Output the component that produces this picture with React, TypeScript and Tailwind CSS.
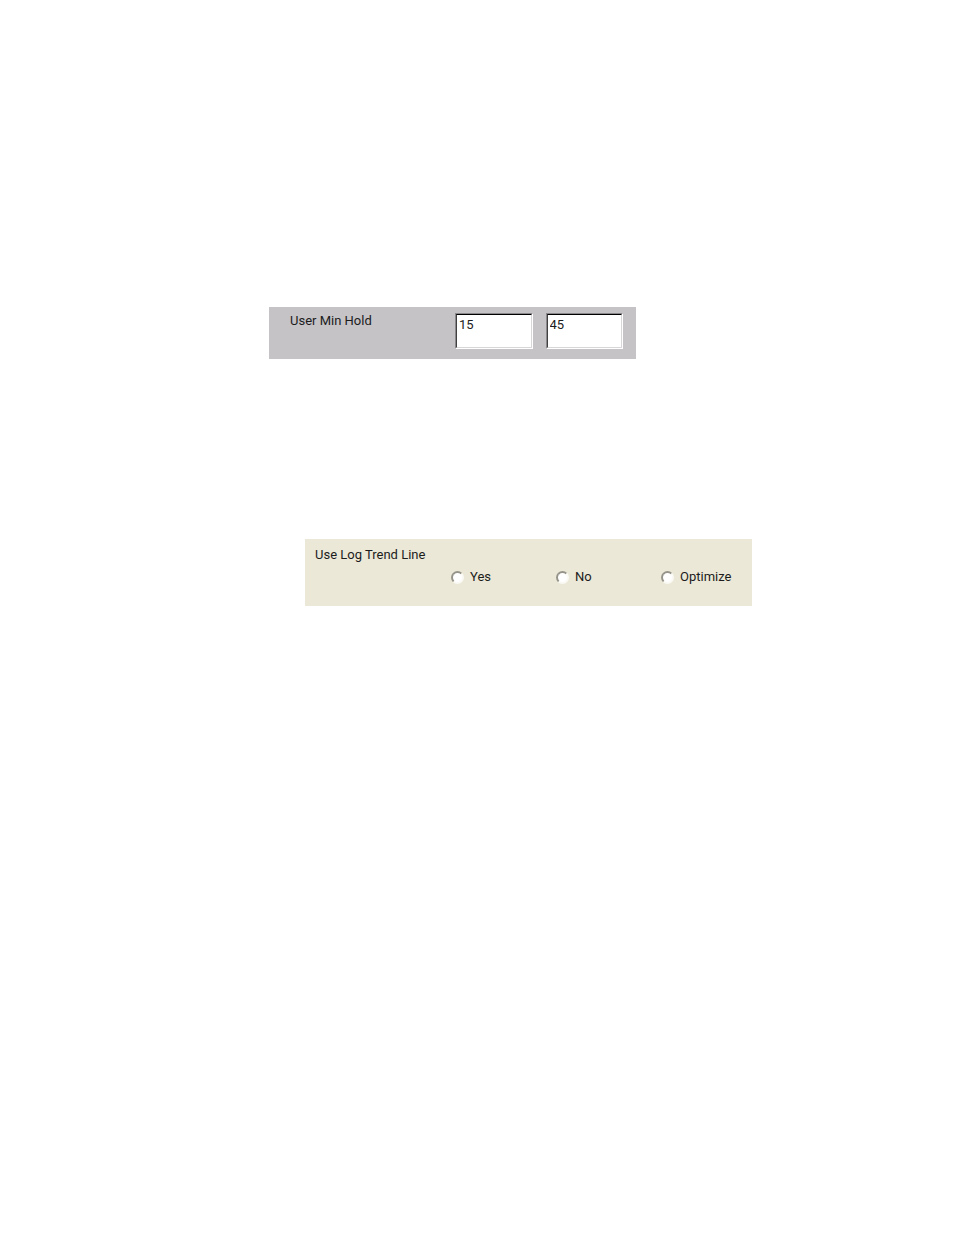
import { useState } from 'react'

const TREND_OPTIONS = ['Yes', 'No', 'Optimize']

function HoldInput({ label, value, onChange }: { label: string; value: string; onChange: (value: string) => void }) {
  return (
    <div className="min-w-0 flex-1 border border-t-[#8a888a] border-l-[#8a888a] border-r-white border-b-white">
      <input
        type="text"
        aria-label={label}
        value={value}
        onChange={e => onChange(e.target.value)}
        className="block h-[34px] w-full border border-t-black border-l-[#404040] border-r-[#d8d6d8] border-b-[#d8d6d8] bg-white px-[2px] pt-px pb-[15px] leading-4 outline-none"
      />
    </div>
  )
}

function MinHoldPanel() {
  const [low, setLow] = useState('15')
  const [high, setHigh] = useState('45')

  return (
    <section className="ml-[269px] flex h-[52px] max-w-[367px] items-start bg-[#c5c3c6] pt-[6px] pr-[13px] pl-[21px]">
      <span className="w-[165px] shrink-0">User Min Hold</span>
      <div className="flex min-w-0 flex-1 gap-[13px]">
        <HoldInput label="User Min Hold low" value={low} onChange={setLow} />
        <HoldInput label="User Min Hold high" value={high} onChange={setHigh} />
      </div>
    </section>
  )
}

function TrendLinePanel() {
  const [choice, setChoice] = useState('')

  return (
    <fieldset className="ml-[305px] h-[67px] max-w-[447px] min-w-0 bg-[#ebe8d7] pt-2 pl-[10px]">
      <legend className="float-left w-full">Use Log Trend Line</legend>
      <div className="clear-both flex pt-[6px] pl-[136px]">
        {TREND_OPTIONS.map(option => (
          <label key={option} className="flex w-[105px] shrink-0 items-center gap-[6px] last:w-auto">
            <input
              type="radio"
              name="trend-line"
              value={option}
              checked={choice === option}
              onChange={() => setChoice(option)}
              className="size-[13px] appearance-none rounded-full border-2 border-t-[#96948a] border-l-[#96948a] border-r-[#faf9f4] border-b-[#faf9f4] bg-white checked:bg-[radial-gradient(circle,black_2px,white_3px)]"
            />
            {option}
          </label>
        ))}
      </div>
    </fieldset>
  )
}

function App() {
  return (
    <main className="flex min-h-screen flex-col gap-[180px] bg-white pt-[307px] font-[Roboto,Arial,sans-serif] text-[13px] leading-4 text-[#1c1c1c]">
      <MinHoldPanel />
      <TrendLinePanel />
    </main>
  )
}

export default App
